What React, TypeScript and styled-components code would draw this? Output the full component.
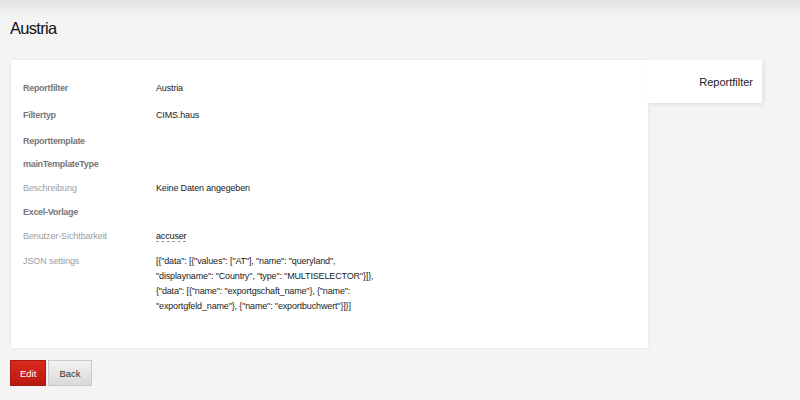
import styled, { createGlobalStyle } from "styled-components";

const GlobalStyle = createGlobalStyle`
  html, body {
    margin: 0;
    padding: 0;
    background: #f4f4f4;
  }
  body {
    font-family: "Liberation Sans", Arial, sans-serif;
    color: #333;
  }
`;

type Field = {
  label: string;
  value?: string;
  strong?: boolean;
  h: number;
  editable?: boolean;
  json?: string[];
};

const fields: Field[] = [
  { label: "Reportfilter", value: "Austria", strong: true, h: 27 },
  { label: "Filtertyp", value: "CIMS.haus", strong: true, h: 26 },
  { label: "Reporttemplate", strong: true, h: 23 },
  { label: "mainTemplateType", strong: true, h: 24 },
  { label: "Beschreibung", value: "Keine Daten angegeben", h: 24 },
  { label: "Excel-Vorlage", strong: true, h: 24 },
  { label: "Benutzer-Sichtbarkeit", value: "accuser", editable: true, h: 25 },
  {
    label: "JSON settings",
    h: 60,
    json: [
      '[{"data": [{"values": ["AT"], "name": "queryland",',
      '"displayname": "Country", "type": "MULTISELECTOR"}]},',
      '{"data": [{"name": "exportgschaft_name"}, {"name":',
      '"exportgfeld_name"}, {"name": "exportbuchwert"}]}]',
    ],
  },
];

const App = () => {
  return (
    <Page>
      <GlobalStyle />
      <Header>
        <Title>Austria</Title>
      </Header>
      <Main>
        <Card>
          {fields.map((f) => (
            <Row key={f.label} $h={f.h}>
              <Label $strong={f.strong}>{f.label}</Label>
              <Value>
                {f.editable ? <Editable>{f.value}</Editable> : f.value}
                {f.json && f.json.map((line) => <JsonLine key={line}>{line}</JsonLine>)}
              </Value>
            </Row>
          ))}
        </Card>
        <Tab>Reportfilter</Tab>
      </Main>
      <Actions>
        <Button $variant="primary">Edit</Button>
        <Button>Back</Button>
      </Actions>
    </Page>
  );
};

const Page = styled.div`
  min-height: 400px;
  background: linear-gradient(#e3e3e3 0, #f4f4f4 18px);
`;

const Header = styled.div`
  height: 58px;
  padding-left: 10px;
  box-sizing: border-box;
  display: flex;
  align-items: center;
`;

const Title = styled.h1`
  margin: 0 0 2px;
  font-size: 16.5px;
  letter-spacing: -0.7px;
  font-weight: normal;
  color: #111;
`;

const Main = styled.div`
  display: flex;
  align-items: flex-start;
  padding-left: 11px;
  padding-top: 2px;
`;

const Card = styled.div`
  width: 637px;
  height: 288px;
  box-sizing: border-box;
  background: #fff;
  padding: 21px 0 0 12px;
  box-shadow: 0 0 3px rgba(0, 0, 0, 0.08);
`;

const Tab = styled.div`
  width: 114px;
  height: 43px;
  box-sizing: border-box;
  background: #fff;
  padding: 16px 9px 0 0;
  text-align: right;
  font-size: 11px;
  color: #222;
  box-shadow: 2px 2px 4px rgba(0, 0, 0, 0.08);
`;

const Row = styled.div<{ $h: number }>`
  display: flex;
  height: ${(p) => p.$h}px;
  font-size: 9px;
  line-height: 15px;
`;

const Label = styled.div<{ $strong?: boolean }>`
  width: 133px;
  flex-shrink: 0;
  color: ${(p) => (p.$strong ? "#777" : "#9c9c9c")};
  font-weight: ${(p) => (p.$strong ? "bold" : "normal")};
  letter-spacing: ${(p) => (p.$strong ? "-0.3px" : "-0.1px")};
`;

const Value = styled.div`
  color: #222;
  letter-spacing: -0.15px;
`;

const Editable = styled.span`
  border-bottom: 1px dashed #999;
  color: #111;
`;

const JsonLine = styled.div``;

const Actions = styled.div`
  display: flex;
  gap: 2px;
  padding: 12px 0 0 10px;
`;

const Button = styled.button<{ $variant?: "primary" }>`
  height: 26px;
  padding: 0 ${(p) => (p.$variant === "primary" ? "9px" : "10px")};
  font-family: inherit;
  font-size: 9.5px;
  border: 1px solid ${(p) => (p.$variant === "primary" ? "#a51a12" : "#c8c8c8")};
  color: ${(p) => (p.$variant === "primary" ? "#fff" : "#333")};
  background: ${(p) =>
    p.$variant === "primary"
      ? "linear-gradient(#dc2a1f, #b81a10)"
      : "linear-gradient(#f2f2f2, #d9d9d9)"};
  cursor: pointer;
`;

export default App;
